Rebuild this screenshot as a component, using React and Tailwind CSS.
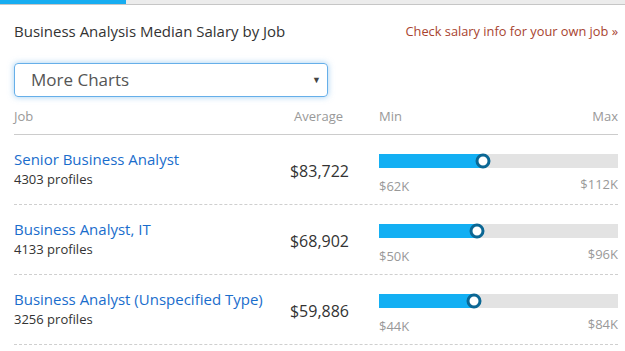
import React from "react";

const rows = [
  { name: "Senior Business Analyst", profiles: "4303 profiles", avg: 83722, min: 62, max: 112 },
  { name: "Business Analyst, IT", profiles: "4133 profiles", avg: 68902, min: 50, max: 96 },
  { name: "Business Analyst (Unspecified Type)", profiles: "3256 profiles", avg: 59886, min: 44, max: 84 },
];

function Row({ r }) {
  const pct = ((r.avg / 1000 - r.min) / (r.max - r.min)) * 100;
  return (
    <div className="flex h-[70px] border-b border-dashed border-[#cfcfcf]">
      <div className="flex flex-1 justify-between">
        <div className="whitespace-nowrap pt-[14px]">
          <div className="text-[15px] leading-[20px] text-[#1a6dcc]">{r.name}</div>
          <div className="mt-[1px] text-[13px] leading-[18px] text-[#333]">{r.profiles}</div>
        </div>
        <div className="flex items-center pt-[2px] text-[16px] text-[#333]">
          ${r.avg.toLocaleString("en-US")}
        </div>
      </div>
      <div className="ml-[30px] w-[239px] pt-[19px]">
        <div className="relative h-[14px] bg-[#e3e3e3]">
          <div className="h-full bg-[#13aff3]" style={{ width: `${pct}%` }} />
          <div
            className="absolute top-1/2 h-[15px] w-[15px] -translate-x-1/2 -translate-y-1/2 rounded-full border-[3px] border-[#0b6794] bg-white"
            style={{ left: `${pct}%` }}
          />
        </div>
        <div className="mt-[8px] flex justify-between text-[13px] leading-[18px] text-[#999]">
          <span className="pt-[1px]">${r.min}K</span>
          <span className="-mt-[1px]">${r.max}K</span>
        </div>
      </div>
    </div>
  );
}

export default function App() {
  return (
    <div className="h-[351px] w-[625px] overflow-hidden bg-white" style={{ fontFamily: '"Open Sans", sans-serif' }}>
      <div className="flex h-[5px] border-b border-[#c6c6c6]">
        <div className="w-[126px] bg-[#17adf1]" />
        <div className="flex-1 bg-[#ececec]" />
      </div>
      <div className="pl-[14px] pr-[7px]">
        <div className="mt-[16px] flex items-center justify-between">
          <div className="text-[15px] leading-[20px] text-[#333]">Business Analysis Median Salary by Job</div>
          <div className="text-[12.8px] leading-[20px] text-[#a8432f]">Check salary info for your own job »</div>
        </div>
        <div className="mt-[22px] flex h-[34px] w-[314px] items-center justify-between rounded-[4px] border border-[#66afe9] pl-[16px] pr-[6px] shadow-[0_0_6px_rgba(102,175,233,0.6)]">
          <span className="text-[17px] text-[#555]">More Charts</span>
          <span className="text-[9px] text-[#444]">▼</span>
        </div>
        <div className="mt-[10px] flex border-b border-[#cccccc] pb-[9px] text-[13px] leading-[18px] text-[#999]">
          <div className="flex flex-1 justify-between">
            <span>Job</span>
            <span className="pr-[6px]">Average</span>
          </div>
          <div className="ml-[30px] flex w-[239px] justify-between">
            <span>Min</span>
            <span>Max</span>
          </div>
        </div>
        {rows.map((r) => (
          <Row key={r.name} r={r} />
        ))}
      </div>
    </div>
  );
}
